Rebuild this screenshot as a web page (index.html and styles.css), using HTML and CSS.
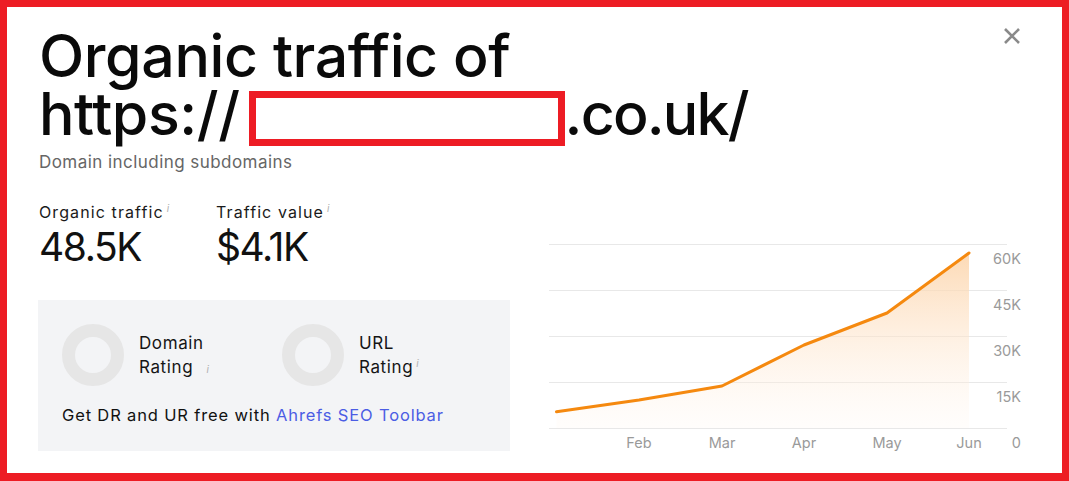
FILE: index.html
```html
<!DOCTYPE html>
<html lang="en">
<head>
<meta charset="utf-8">
<title>Organic traffic</title>
<link rel="stylesheet" href="styles.css">
</head>
<body>
<div class="frame">
  <button class="close" aria-label="Close">
    <svg width="18" height="18" viewBox="0 0 18 18"><path d="M2 2 L16 16 M16 2 L2 16" stroke="#8a8a8a" stroke-width="2.6" fill="none"/></svg>
  </button>
  <h1 class="title"><span class="tline">Organic traffic of</span><span class="tline">https://<span class="redact"></span><span class="tld">.co.uk/</span></span></h1>
  <p class="subtitle">Domain including subdomains</p>
  <div class="main">
    <div class="left">
      <div class="metrics">
        <div class="metric m1">
          <div class="mlabel">Organic traffic<sup class="info">i</sup></div>
          <div class="mvalue">48.5K</div>
        </div>
        <div class="metric">
          <div class="mlabel">Traffic value<sup class="info">i</sup></div>
          <div class="mvalue">$4.1K</div>
        </div>
      </div>
      <div class="ratings">
        <div class="rrow">
          <div class="rating">
            <div class="donut"></div>
            <div class="rtext">Domain<br>Rating <sup class="info wide">i</sup></div>
          </div>
          <div class="rating">
            <div class="donut"></div>
            <div class="rtext">URL<br>Rating<sup class="info">i</sup></div>
          </div>
        </div>
        <p class="promo">Get DR and UR free with <a href="#" class="link">Ahrefs SEO Toolbar</a></p>
      </div>
    </div>
    <div class="chart">
      <svg width="480" height="216" viewBox="0 0 480 216">
        <defs>
          <linearGradient id="fill" gradientUnits="userSpaceOnUse" x1="0" y1="17" x2="0" y2="192">
            <stop offset="0" stop-color="#fcd3a8" stop-opacity="0.85"/>
            <stop offset="1" stop-color="#fff6ee" stop-opacity="0.2"/>
          </linearGradient>
        </defs>
        <g stroke="#e8e8e8" stroke-width="1">
          <line x1="0" y1="8.5" x2="458" y2="8.5"/>
          <line x1="0" y1="54.5" x2="458" y2="54.5"/>
          <line x1="0" y1="100.5" x2="458" y2="100.5"/>
          <line x1="0" y1="146.5" x2="458" y2="146.5"/>
          <line x1="0" y1="192.5" x2="458" y2="192.5"/>
        </g>
        <polygon points="7.5,175.7 90,164 173,150 255,109 338,77 420,17 420,192 7.5,192" fill="url(#fill)"/>
        <polyline points="7.5,175.7 90,164 173,150 255,109 338,77 420,17" fill="none" stroke="#f5890f" stroke-width="3" stroke-linejoin="round" stroke-linecap="round"/>
        <g class="axis" text-anchor="end">
          <text x="472" y="28">60K</text>
          <text x="472" y="74">45K</text>
          <text x="472" y="120">30K</text>
          <text x="472" y="166">15K</text>
          <text x="472" y="212">0</text>
        </g>
        <g class="axis" text-anchor="middle">
          <text x="90" y="212">Feb</text>
          <text x="173" y="212">Mar</text>
          <text x="255" y="212">Apr</text>
          <text x="338" y="212">May</text>
          <text x="420" y="212">Jun</text>
        </g>
      </svg>
    </div>
  </div>
</div>
</body>
</html>
```

FILE: styles.css
```css
* { box-sizing: border-box; }
html, body { margin: 0; padding: 0; background: #fff; }
body { font-family: Inter, "Liberation Sans", sans-serif; color: #111; }

.frame {
  position: relative;
  width: 1069px;
  height: 481px;
  border: 7px solid #ed1c24;
  border-bottom-width: 8px;
  background: #fff;
  padding: 19.5px 32px 0 32px;
  overflow: hidden;
}

.close {
  position: absolute;
  top: 20px;
  right: 41px;
  width: 18px;
  height: 18px;
  padding: 0;
  border: 0;
  background: none;
  cursor: pointer;
}
.close svg { display: block; }

.title {
  margin: 0;
  font-size: 59px;
  font-weight: 500;
  color: #0a0a0a;
  letter-spacing: -0.4px;
}
.tline {
  display: block;
  height: 58px;
  line-height: 58px;
  white-space: nowrap;
}
.tld { letter-spacing: -1.8px; }
.redact {
  display: inline-block;
  width: 316px;
  height: 55px;
  border: 7px solid #ed1c24;
  background: #fff;
  margin: 0 0 -4px 9px;
  vertical-align: -7px;
}

.subtitle {
  margin: 8.5px 0 0;
  font-size: 17px;
  line-height: 22px;
  color: #666;
  letter-spacing: 0.45px;
}

.main {
  display: flex;
  align-items: flex-end;
}
.left {
  width: 472px;
  flex: none;
  margin-left: -1px;
}

.metrics {
  display: flex;
  margin-top: 29px;
  padding-left: 1px;
}
.metric.m1 { width: 177px; }
.mlabel {
  font-size: 16px;
  line-height: 20px;
  color: #1a1a1a;
  letter-spacing: 1.1px;
}
.mvalue {
  margin-top: 3.4px;
  font-size: 39px;
  line-height: 44px;
  color: #111;
  letter-spacing: -1.4px;
}
.info {
  font-size: 10px;
  color: #b0b0b0;
  font-style: italic;
  margin-left: 3px;
  vertical-align: 6px;
  line-height: 0;
}
.info.wide { margin-left: 8px; vertical-align: 0; }

.ratings {
  margin-top: 31px;
  background: #f3f4f6;
  height: 151px;
  padding: 24px 24px 0;
}
.rrow { display: flex; }
.rating {
  width: 220px;
  flex: none;
  display: flex;
  align-items: center;
}
.donut {
  width: 62px;
  height: 62px;
  border-radius: 50%;
  border: 13px solid #e6e6e6;
  flex: none;
}
.rtext {
  margin-left: 15px;
  font-size: 17px;
  line-height: 24px;
  color: #151515;
  letter-spacing: 0.6px;
}
.promo {
  margin: 18px 0 0;
  font-size: 16.5px;
  line-height: 22px;
  color: #111;
  letter-spacing: 0.85px;
  white-space: nowrap;
}
.link { color: #4b5de4; text-decoration: none; }

.chart {
  margin-left: 39px;
  margin-bottom: -1px;
}
.chart svg { display: block; }
.axis text {
  font-family: Inter, "Liberation Sans", sans-serif;
  font-size: 14.5px;
  fill: #9a9a9a;
}
```
